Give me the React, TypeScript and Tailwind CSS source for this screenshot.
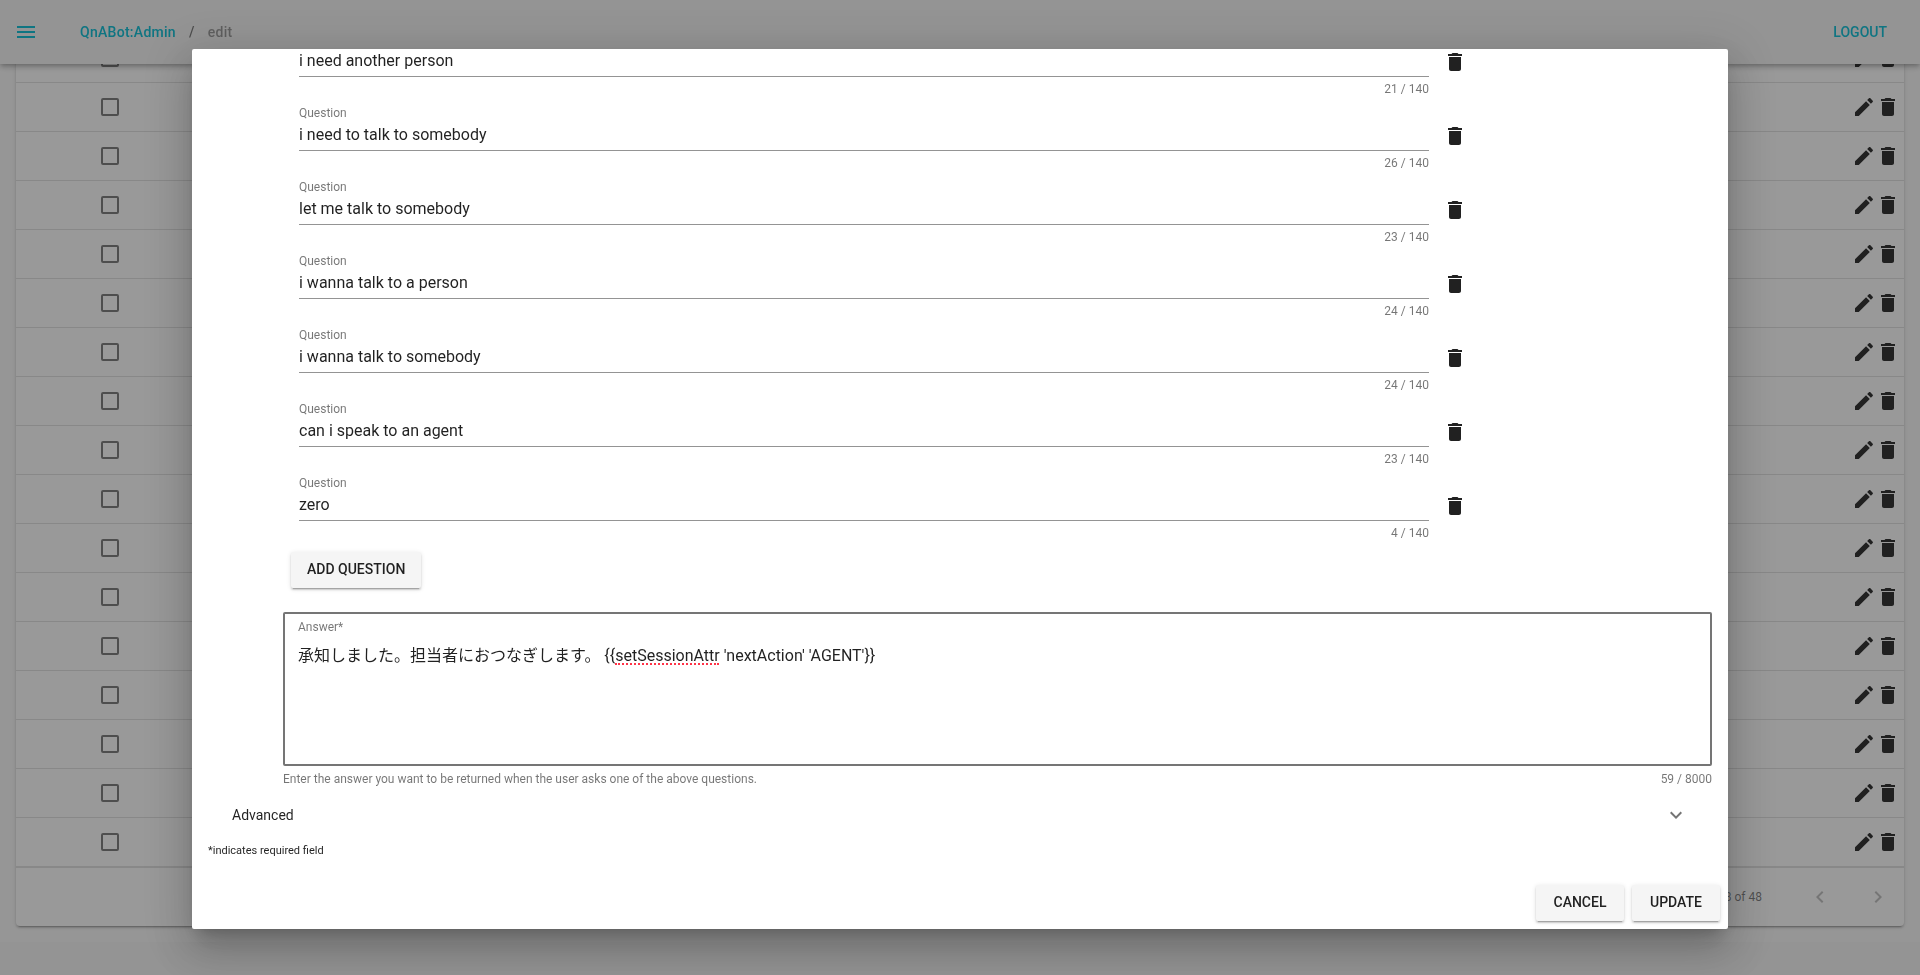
import React from "react";

const questions = [
  "i need another person",
  "i need to talk to somebody",
  "let me talk to somebody",
  "i wanna talk to a person",
  "i wanna talk to somebody",
  "can i speak to an agent",
  "zero",
];

const lengths = [21, 26, 23, 24, 24, 23, 4];

const rows = Array.from({ length: 17 }, (_, i) => i);

const icons = {
  menu: "M3 18h18v-2H3v2zm0-5h18v-2H3v2zm0-7v2h18V6H3z",
  trash: "M6 19c0 1.1.9 2 2 2h8c1.1 0 2-.9 2-2V7H6v12zM19 4h-3.5l-1-1h-5l-1 1H5v2h14V4z",
  edit: "M3 17.25V21h3.75L17.81 9.94l-3.75-3.75L3 17.25zM20.71 7.04c.39-.39.39-1.02 0-1.41l-2.34-2.34c-.39-.39-1.02-.39-1.41 0l-1.83 1.83 3.75 3.75 1.83-1.83z",
  down: "M7.41 8.59L12 13.17l4.59-4.58L18 10l-6 6-6-6 1.41-1.41z",
  left: "M15.41 7.41L14 6l-6 6 6 6 1.41-1.41L10.83 12z",
  right: "M10 6L8.59 7.41 13.17 12l-4.58 4.59L10 18l6-6z",
};

function Icon({ name }: { name: keyof typeof icons }) {
  return (
    <svg viewBox="0 0 24 24" className="block size-6 fill-current" aria-hidden="true">
      <path d={icons[name]} />
    </svg>
  );
}

function Header() {
  return (
    <header className="fixed inset-x-0 top-0 z-10 flex h-16 items-center bg-[#f5f5f5] pl-[14px] pr-[33px] text-sm font-medium text-[#00bcd4] shadow-[0_2px_4px_-1px_rgba(0,0,0,0.2),0_4px_5px_0_rgba(0,0,0,0.14),0_1px_10px_0_rgba(0,0,0,0.12)]">
      <button type="button" aria-label="Menu">
        <Icon name="menu" />
      </button>
      <nav className="ml-[42px] flex flex-1 items-center tracking-[0.02em]">
        <a href="#admin">QnABot:Admin</a>
        <span className="mx-[13px] text-black/55">/</span>
        <span className="text-black/40">edit</span>
      </nav>
      <a href="#logout">LOGOUT</a>
    </header>
  );
}

function QuestionTable() {
  return (
    <div className="rounded-sm bg-white shadow-[0_3px_1px_-2px_rgba(0,0,0,0.2),0_2px_2px_0_rgba(0,0,0,0.14),0_1px_5px_0_rgba(0,0,0,0.12)]">
      <table className="w-full border-separate border-spacing-0">
        <tbody>
          {rows.map((row) => (
            <tr key={row} className="h-[49px]">
              <td className="w-[188px] border-b border-black/12 p-0">
                <input
                  type="checkbox"
                  aria-label="Select question"
                  className="mx-auto block size-[18px] appearance-none rounded-xs border-2 border-black/54"
                />
              </td>
              <td className="border-b border-black/12 p-0 pr-1">
                <div className="flex justify-end text-[#212121]">
                  <button type="button" aria-label="Edit">
                    <Icon name="edit" />
                  </button>
                  <button type="button" aria-label="Delete">
                    <Icon name="trash" />
                  </button>
                </div>
              </td>
            </tr>
          ))}
        </tbody>
      </table>
      <div className="flex h-[59px] items-center justify-end border-t border-black/12 pr-[14px] text-xs text-black/54">
        <span>31-48 of 48</span>
        <button type="button" aria-label="Previous page" className="ml-[46px] text-black/26">
          <Icon name="left" />
        </button>
        <button type="button" aria-label="Next page" className="ml-[34px] text-black/26">
          <Icon name="right" />
        </button>
      </div>
    </div>
  );
}

function RaisedButton({ children }: { children: React.ReactNode }) {
  return (
    <button
      type="button"
      className="h-9 min-w-[88px] rounded-xs bg-[#f5f5f5] px-4 pb-[2px] text-sm font-medium shadow-[0_3px_1px_-2px_rgba(0,0,0,0.2),0_2px_2px_0_rgba(0,0,0,0.14),0_1px_5px_0_rgba(0,0,0,0.12)]"
    >
      {children}
    </button>
  );
}

type QuestionFieldProps = {
  id: string;
  value: string;
  length: number;
  scrolledOff: boolean;
};

function QuestionField({ id, value, length, scrolledOff }: QuestionFieldProps) {
  return (
    <div className="flex items-start gap-[14px] pb-2">
      <div className="flex-1">
        <label
          htmlFor={id}
          className={`block text-xs leading-4 text-black/54 ${scrolledOff ? "invisible" : ""}`}
        >
          Question
        </label>
        <input
          id={id}
          type="text"
          defaultValue={value}
          className="block h-[30px] w-full border-b border-[#949494] pb-[2px] text-base outline-none"
        />
        <div className="pt-1 text-right text-xs leading-4 text-black/54">{length} / 140</div>
      </div>
      <button type="button" aria-label="Delete question" className="mt-[19px]">
        <Icon name="trash" />
      </button>
    </div>
  );
}

function EditDialog() {
  return (
    <div className="fixed inset-0 z-20 flex justify-center bg-[#212121]/46 pb-[46px] pt-[49px]">
      <div
        role="dialog"
        aria-label="Edit question"
        className="flex w-4/5 flex-col justify-end overflow-hidden rounded-xs bg-white pb-2 text-black/87 shadow-[0_11px_15px_-7px_rgba(0,0,0,0.2),0_24px_38px_3px_rgba(0,0,0,0.14),0_9px_46px_8px_rgba(0,0,0,0.12)]"
      >
        <div className="pl-[107px] pr-[261px]">
          {questions.map((question, i) => (
            <QuestionField
              key={question}
              id={`question-${i}`}
              value={question}
              length={lengths[i]}
              scrolledOff={i === 0}
            />
          ))}
        </div>
        <div className="mt-[3px] pl-[99px]">
          <RaisedButton>ADD QUESTION</RaisedButton>
        </div>

        <div className="mt-6 pl-[91px] pr-4">
          <div className="relative h-[154px] rounded-xs border-2 border-[#757575] px-[13px] pt-[5px]">
            <label htmlFor="answer" className="block text-xs leading-4 text-black/54">
              Answer*
            </label>
            <textarea
              id="answer"
              spellCheck={false}
              defaultValue="承知しました。担当者におつなぎします。 {{setSessionAttr 'nextAction' 'AGENT'}}"
              className="mt-[9px] block h-[115px] w-full resize-none text-base leading-6 outline-none"
            />
            {/* spelling mark under setSessionAttr */}
            <span className="absolute left-[330px] top-[49px] w-[104px] border-b-2 border-dotted border-[#ff3347]" />
          </div>
          <div className="mt-[5px] flex justify-between text-xs leading-4 text-black/54">
            <span>Enter the answer you want to be returned when the user asks one of the above questions.</span>
            <span>59 / 8000</span>
          </div>
        </div>

        <button type="button" className="mt-4 flex h-6 items-center justify-between px-10 text-sm">
          Advanced
          <span className="text-black/54">
            <Icon name="down" />
          </span>
        </button>
        <p className="mt-4 pl-4 text-[11px] leading-4">*indicates required field</p>
        <div className="mt-[26px] flex justify-end gap-2 pr-2">
          <RaisedButton>CANCEL</RaisedButton>
          <RaisedButton>UPDATE</RaisedButton>
        </div>
      </div>
    </div>
  );
}

function App() {
  return (
    <div className="min-h-screen bg-[#f5f5f5] font-['Roboto','Noto_Sans_CJK_JP',sans-serif]">
      <Header />
      <main className="bg-[#fafafa] px-4 pb-4 pt-[34px]">
        <QuestionTable />
      </main>
      <EditDialog />
    </div>
  );
}

export default App;
